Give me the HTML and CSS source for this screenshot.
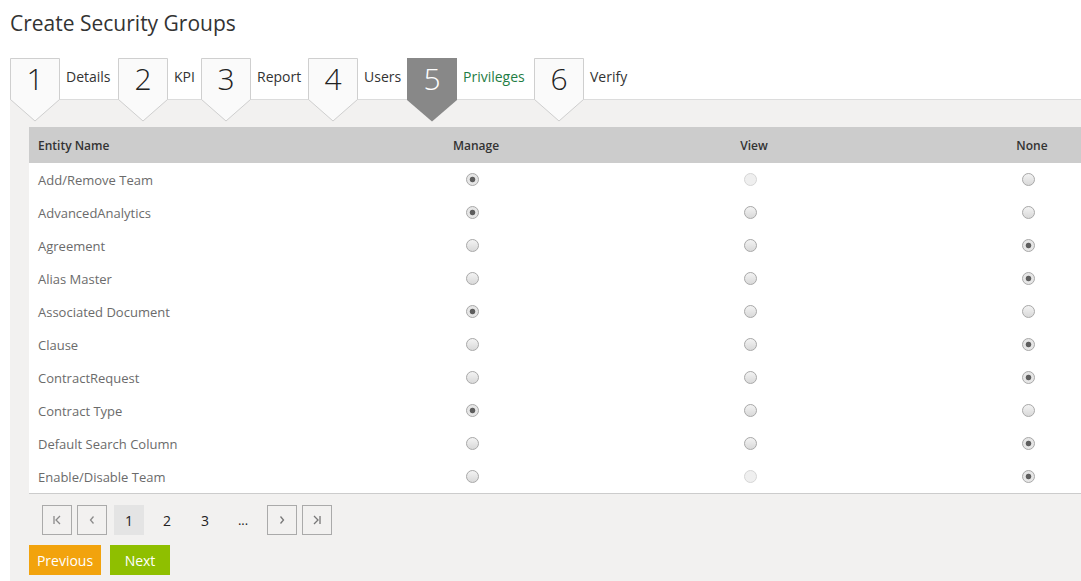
FILE: index.html
```html
<!DOCTYPE html>
<html>
<head>
<meta charset="utf-8">
<link rel="stylesheet" href="styles.css">
</head>
<body>
<div class="screen">
  <h1 class="title">Create Security Groups</h1>
  <div class="steps">
    <div class="tab"><svg class="tab-shape" width="50" height="64" viewBox="0 0 50 64"><path d="M0.5 0.5H49.5V41.5L25 63L0.5 41.5Z" fill="#fafafa" stroke="#cfcfcf"/></svg><span class="num">1</span></div><div class="label w1">Details</div>
    <div class="tab"><svg class="tab-shape" width="50" height="64" viewBox="0 0 50 64"><path d="M0.5 0.5H49.5V41.5L25 63L0.5 41.5Z" fill="#fafafa" stroke="#cfcfcf"/></svg><span class="num">2</span></div><div class="label w2">KPI</div>
    <div class="tab"><svg class="tab-shape" width="50" height="64" viewBox="0 0 50 64"><path d="M0.5 0.5H49.5V41.5L25 63L0.5 41.5Z" fill="#fafafa" stroke="#cfcfcf"/></svg><span class="num">3</span></div><div class="label w3">Report</div>
    <div class="tab"><svg class="tab-shape" width="50" height="64" viewBox="0 0 50 64"><path d="M0.5 0.5H49.5V41.5L25 63L0.5 41.5Z" fill="#fafafa" stroke="#cfcfcf"/></svg><span class="num">4</span></div><div class="label w4">Users</div>
    <div class="tab active"><svg class="tab-shape" width="50" height="64" viewBox="0 0 50 64"><path d="M0 0H50V42L25 63.5L0 42Z" fill="#888888"/></svg><span class="num">5</span></div><div class="label w5 current">Privileges</div>
    <div class="tab"><svg class="tab-shape" width="50" height="64" viewBox="0 0 50 64"><path d="M0.5 0.5H49.5V41.5L25 63L0.5 41.5Z" fill="#fafafa" stroke="#cfcfcf"/></svg><span class="num">6</span></div><div class="label w6">Verify</div>
  </div>
  <div class="panel">
    <table class="grid">
      <colgroup><col class="c-name"><col class="c-opt"><col class="c-opt"><col class="c-last"></colgroup>
      <thead>
        <tr><th class="name">Entity Name</th><th>Manage</th><th>View</th><th class="last">None</th></tr>
      </thead>
      <tbody>
        <tr><td class="name">Add/Remove Team</td><td><span class="radio on"></span></td><td><span class="radio dis"></span></td><td class="last"><span class="radio"></span></td></tr>
        <tr><td class="name">AdvancedAnalytics</td><td><span class="radio on"></span></td><td><span class="radio"></span></td><td class="last"><span class="radio"></span></td></tr>
        <tr><td class="name">Agreement</td><td><span class="radio"></span></td><td><span class="radio"></span></td><td class="last"><span class="radio on"></span></td></tr>
        <tr><td class="name">Alias Master</td><td><span class="radio"></span></td><td><span class="radio"></span></td><td class="last"><span class="radio on"></span></td></tr>
        <tr><td class="name">Associated Document</td><td><span class="radio on"></span></td><td><span class="radio"></span></td><td class="last"><span class="radio"></span></td></tr>
        <tr><td class="name">Clause</td><td><span class="radio"></span></td><td><span class="radio"></span></td><td class="last"><span class="radio on"></span></td></tr>
        <tr><td class="name">ContractRequest</td><td><span class="radio"></span></td><td><span class="radio"></span></td><td class="last"><span class="radio on"></span></td></tr>
        <tr><td class="name">Contract Type</td><td><span class="radio on"></span></td><td><span class="radio"></span></td><td class="last"><span class="radio"></span></td></tr>
        <tr><td class="name">Default Search Column</td><td><span class="radio"></span></td><td><span class="radio"></span></td><td class="last"><span class="radio on"></span></td></tr>
        <tr><td class="name">Enable/Disable Team</td><td><span class="radio"></span></td><td><span class="radio dis"></span></td><td class="last"><span class="radio on"></span></td></tr>
      </tbody>
    </table>
    <div class="pager">
      <span class="pbtn first"><svg width="10" height="10" viewBox="0 0 10 10"><path d="M2 1v8M8 1L4 5l4 4" fill="none" stroke="#8a8a8a" stroke-width="1.3"/></svg></span>
      <span class="pbtn prev"><svg width="10" height="10" viewBox="0 0 10 10"><path d="M6.5 1.5L3.5 5l3 3.5" fill="none" stroke="#8a8a8a" stroke-width="1.3"/></svg></span>
      <span class="pnum current">1</span>
      <span class="pnum">2</span>
      <span class="pnum">3</span>
      <span class="pnum dots">...</span>
      <span class="pbtn next"><svg width="10" height="10" viewBox="0 0 10 10"><path d="M3.5 1.5L6.5 5l-3 3.5" fill="none" stroke="#777" stroke-width="1.3"/></svg></span>
      <span class="pbtn last"><svg width="10" height="10" viewBox="0 0 10 10"><path d="M2 1l4 4-4 4M8 1v8" fill="none" stroke="#777" stroke-width="1.3"/></svg></span>
    </div>
    <div class="actions">
      <span class="btn prev-btn">Previous</span>
      <span class="btn next-btn">Next</span>
    </div>
  </div>
</div>
</body>
</html>
```

FILE: styles.css
```css
html, body {
  margin: 0;
  padding: 0;
  background: #ffffff;
}
body {
  font-family: "Open Sans", "Noto Sans", "Liberation Sans", sans-serif;
  color: #333;
}
.screen {
  padding-left: 10px;
}
.title {
  margin: 0;
  padding-top: 8px;
  height: 58px;
  box-sizing: border-box;
  font-size: 21px;
  font-weight: 400;
  line-height: 30px;
  color: #333;
}
.steps {
  display: flex;
  align-items: flex-start;
  height: 41px;
}
.tab {
  position: relative;
  z-index: 2;
  flex: 0 0 auto;
  width: 50px;
  height: 41px;
  text-align: center;
}
.tab-shape {
  position: absolute;
  left: 0;
  top: 0;
}
.num {
  position: relative;
  display: block;
  font-size: 30px;
  font-weight: 300;
  line-height: 41px;
  color: #222;
}
.tab.active .num {
  color: #fff;
}
.label {
  flex: 0 0 auto;
  box-sizing: border-box;
  padding: 9px 0 0 6px;
  font-size: 14px;
  line-height: 20px;
  color: #333;
  white-space: nowrap;
}
.label.current { color: #1f7d45; }
.w1 { width: 58px; }
.w2 { width: 33px; }
.w3 { width: 57px; }
.w4 { width: 49px; }
.w5 { width: 77px; }
.w6 { width: 60px; }
.panel {
  background: #f2f1f0;
  border-top: 1px solid #dcdcdc;
  padding: 27px 0 7px 19px;
}
.grid {
  border-collapse: collapse;
  table-layout: fixed;
  width: 1052px;
  background: #fff;
  border-bottom: 1px solid #cccccc;
}
.c-name { width: 308px; }
.c-opt { width: 278px; }
.c-last { width: 188px; }
.grid th {
  background: #cccccc;
  height: 36px;
  padding: 0;
  font-size: 12px;
  font-weight: 600;
  color: #333;
  text-align: center;
}
.grid td {
  height: 33px;
  padding: 0;
  text-align: center;
  font-size: 13px;
  color: #6b6b6b;
}
.grid .name {
  text-align: left;
  padding-left: 9px;
}
.grid .last {
  padding-left: 90px;
}
.radio {
  display: inline-block;
  vertical-align: middle;
  width: 13px;
  height: 13px;
  margin: 0 8px 3px 0;
  border-radius: 50%;
  border: 1px solid #a9a9a9;
  background: linear-gradient(#f3f3f3, #d9d9d9);
  box-sizing: border-box;
}
.radio.on {
  background: radial-gradient(circle, #5e5e5e 0, #5e5e5e 2.4px, #e6e6e6 3.2px, #e6e6e6 100%);
}
.radio.dis {
  border-color: #d6d6d6;
  background: #efefef;
}
.pager {
  display: flex;
  align-items: center;
  margin: 11px 0 0 13px;
  height: 30px;
}
.pbtn, .pnum {
  width: 30px;
  height: 30px;
  box-sizing: border-box;
  display: flex;
  align-items: center;
  justify-content: center;
  font-size: 14px;
  color: #222;
  margin-right: 8px;
}
.pbtn {
  border: 1px solid #aaaaaa;
}
.pbtn.first { margin-right: 5px; }
.pbtn.prev { margin-right: 7px; }
.pnum.current { background: #e4e4e4; }
.pnum.dots { font-size: 13px; margin-right: 9px; }
.pbtn.next { margin-right: 5px; }
.actions {
  display: flex;
  gap: 9px;
  margin-top: 10px;
}
.btn {
  display: flex;
  align-items: center;
  justify-content: center;
  height: 30px;
  font-size: 14px;
  color: #fff;
}
.prev-btn { width: 72px; background: #f2a30d; }
.next-btn { width: 60px; background: #8fbf00; }
```
